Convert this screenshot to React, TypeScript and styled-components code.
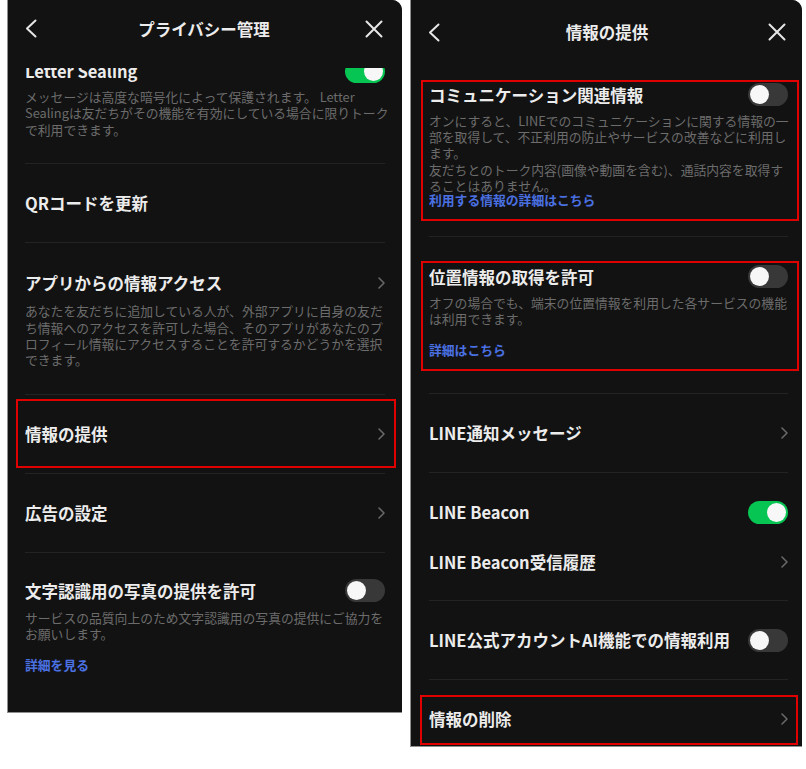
import React from "react";
import styled, { createGlobalStyle } from "styled-components";

const Global = createGlobalStyle`
  html, body { margin: 0; padding: 0; background: #ffffff; }
  body { font-family: "Noto Sans CJK JP", "Noto Sans", sans-serif; }
  #root { width: 806px; height: 769px; }
`;

const Page = styled.div`
  display: flex;
  align-items: flex-start;
  gap: 8px;
  padding-left: 7px;
  width: 806px;
  height: 769px;
  box-sizing: border-box;
`;

const Panel = styled.section<{ $w: number; $h: number; $pl: number; $pr: number }>`
  --pl: ${(p) => p.$pl}px;
  --pr: ${(p) => p.$pr}px;
  width: ${(p) => p.$w}px;
  height: ${(p) => p.$h}px;
  box-sizing: border-box;
  background: #121212;
  border-left: 1px solid #8f8f8f;
  border-bottom: 1px solid #8f8f8f;
  border-top-right-radius: 10px;
  display: flex;
  flex-direction: column;
  overflow: hidden;
`;

const Header = styled.header<{ $h: number; $pb: number; $il: number; $ir: number }>`
  position: relative;
  z-index: 1;
  flex-shrink: 0;
  height: ${(p) => p.$h}px;
  box-sizing: border-box;
  padding: 0 ${(p) => p.$ir}px ${(p) => p.$pb}px ${(p) => p.$il}px;
  background: #121212;
  display: grid;
  grid-template-columns: 1fr auto 1fr;
  align-items: center;
`;

const HeaderTitle = styled.h1`
  margin: 0;
  font-size: 16.5px;
  font-weight: 700;
  color: #ececec;
  white-space: nowrap;
`;

const HeaderBtn = styled.span<{ $end?: boolean }>`
  display: flex;
  justify-self: ${(p) => (p.$end ? "end" : "start")};
`;

const List = styled.div`
  flex: 1;
  min-height: 0;
  overflow: hidden;
  display: flex;
  flex-direction: column;
`;

const Section = styled.div<{ $pt: number; $pb: number; $mt?: number; $gap?: number }>`
  position: relative;
  flex-shrink: 0;
  display: flex;
  flex-direction: column;
  gap: ${(p) => p.$gap ?? 0}px;
  margin-top: ${(p) => p.$mt ?? 0}px;
  padding: ${(p) => p.$pt}px var(--pr) ${(p) => p.$pb}px var(--pl);
`;

const Row = styled.div<{ $h?: number }>`
  position: relative;
  flex-shrink: 0;
  height: ${(p) => p.$h ?? 78}px;
  padding: 0 var(--pr) 0 var(--pl);
  display: flex;
  align-items: center;
  justify-content: space-between;
`;

const TitleRow = styled.div`
  height: 22px;
  display: flex;
  align-items: center;
  justify-content: space-between;
  gap: 12px;
`;

const Title = styled.span`
  font-size: 16.5px;
  font-weight: 700;
  color: #ececec;
  white-space: nowrap;
  line-height: 22px;
`;

const Desc = styled.p<{ $gap: number }>`
  margin: ${(p) => p.$gap}px 0 0;
  font-size: 12.8px;
  line-height: 16.4px;
  color: #6c6c6c;
`;

const Line = styled.span`
  display: block;
  white-space: nowrap;
`;

const Link = styled.a<{ $mt: number }>`
  display: block;
  margin-top: ${(p) => p.$mt}px;
  font-size: 12.8px;
  line-height: 16.4px;
  font-weight: 700;
  color: #4a70e2;
  text-decoration: none;
  white-space: nowrap;
`;

const Divider = styled.hr`
  flex-shrink: 0;
  margin: 0 var(--pr) 0 var(--pl);
  border: 0;
  height: 1px;
  background: #232323;
`;

const Highlight = styled.div<{ $t: number; $b: number; $l: number; $r: number }>`
  position: absolute;
  top: ${(p) => p.$t}px;
  bottom: ${(p) => p.$b}px;
  left: ${(p) => p.$l}px;
  right: ${(p) => p.$r}px;
  border: 2px solid #e00000;
  pointer-events: none;
`;

const Toggle = styled.span<{ $on?: boolean }>`
  position: relative;
  flex-shrink: 0;
  width: 40px;
  height: 23px;
  border-radius: 12px;
  background: ${(p) => (p.$on ? "#07c552" : "#383838")};
  &::after {
    content: "";
    position: absolute;
    top: 2px;
    left: ${(p) => (p.$on ? "19px" : "2px")};
    width: 19px;
    height: 19px;
    border-radius: 50%;
    background: #f7f7f7;
  }
`;

const Chevron = () => (
  <svg width="7" height="12" viewBox="0 0 7 12" fill="none">
    <polyline points="1,1 6,6 1,11" stroke="#6a6a6a" strokeWidth="1.5" strokeLinecap="round" strokeLinejoin="round" />
  </svg>
);

const BackIcon = () => (
  <svg width="12" height="19" viewBox="0 0 12 19" fill="none">
    <polyline points="10.5,1.5 2,9.5 10.5,17.5" stroke="#e6e6e6" strokeWidth="2" strokeLinecap="round" strokeLinejoin="round" />
  </svg>
);

const CloseIcon = () => (
  <svg width="18" height="18" viewBox="0 0 18 18" fill="none">
    <path d="M1.5 1.5 L16.5 16.5 M16.5 1.5 L1.5 16.5" stroke="#e6e6e6" strokeWidth="2" strokeLinecap="round" />
  </svg>
);

const Lines = ({ lines }: { lines: string[] }) => (
  <>
    {lines.map((l, i) => (
      <Line key={i}>{l}</Line>
    ))}
  </>
);

const PrivacyPanel = () => (
  <Panel $w={395} $h={713} $pl={17} $pr={17}>
    <Header $h={68} $pb={11} $il={17} $ir={19}>
      <HeaderBtn>
        <BackIcon />
      </HeaderBtn>
      <HeaderTitle>プライバシー管理</HeaderTitle>
      <HeaderBtn $end>
        <CloseIcon />
      </HeaderBtn>
    </Header>
    <List>
      <Section $mt={-8} $pt={0} $pb={25}>
        <TitleRow>
          <Title>Letter Sealing</Title>
          <Toggle $on />
        </TitleRow>
        <Desc $gap={7}>
          <Lines
            lines={[
              "メッセージは高度な暗号化によって保護されます。 Letter",
              "Sealingは友だちがその機能を有効にしている場合に限りトーク",
              "で利用できます。",
            ]}
          />
        </Desc>
      </Section>
      <Divider />
      <Row>
        <Title>QRコードを更新</Title>
      </Row>
      <Divider />
      <Section $pt={29} $pb={25}>
        <TitleRow>
          <Title>アプリからの情報アクセス</Title>
          <Chevron />
        </TitleRow>
        <Desc $gap={9}>
          <Lines
            lines={[
              "あなたを友だちに追加している人が、外部アプリに自身の友だ",
              "ち情報へのアクセスを許可した場合、そのアプリがあなたのプ",
              "ロフィール情報にアクセスすることを許可するかどうかを選択",
              "できます。",
            ]}
          />
        </Desc>
      </Section>
      <Divider />
      <Row>
        <Title>情報の提供</Title>
        <Chevron />
        <Highlight $t={4} $b={5} $l={8} $r={6} />
      </Row>
      <Divider />
      <Row>
        <Title>広告の設定</Title>
        <Chevron />
      </Row>
      <Divider />
      <Section $pt={27} $pb={0}>
        <TitleRow>
          <Title>文字認識用の写真の提供を許可</Title>
          <Toggle />
        </TitleRow>
        <Desc $gap={8}>
          <Lines lines={["サービスの品質向上のため文字認識用の写真の提供にご協力を", "お願いします。"]} />
        </Desc>
        <Link $mt={14.5}>詳細を見る</Link>
      </Section>
    </List>
  </Panel>
);

const ProvidePanel = () => (
  <Panel $w={392} $h={747} $pl={18} $pr={14}>
    <Header $h={64} $pb={0} $il={17} $ir={16}>
      <HeaderBtn>
        <BackIcon />
      </HeaderBtn>
      <HeaderTitle>情報の提供</HeaderTitle>
      <HeaderBtn $end>
        <CloseIcon />
      </HeaderBtn>
    </Header>
    <List>
      <Section $pt={19.5} $pb={28}>
        <Highlight $t={16} $b={15} $l={10} $r={3} />
        <TitleRow>
          <Title>コミュニケーション関連情報</Title>
          <Toggle />
        </TitleRow>
        <Desc $gap={7}>
          <Lines
            lines={[
              "オンにすると、LINEでのコミュニケーションに関する情報の一",
              "部を取得して、不正利用の防止やサービスの改善などに利用し",
              "ます。",
              "友だちとのトーク内容(画像や動画を含む)、通話内容を取得す",
              "ることはありません。",
            ]}
          />
        </Desc>
        <Link $mt={-3}>利用する情報の詳細はこちら</Link>
      </Section>
      <Divider />
      <Section $pt={29} $pb={35}>
        <Highlight $t={23.6} $b={22} $l={10} $r={3} />
        <TitleRow>
          <Title>位置情報の取得を許可</Title>
          <Toggle />
        </TitleRow>
        <Desc $gap={7}>
          <Lines lines={["オフの場合でも、端末の位置情報を利用した各サービスの機能", "は利用できます。"]} />
        </Desc>
        <Link $mt={14.2}>詳細はこちら</Link>
      </Section>
      <Divider />
      <Row>
        <Title>LINE通知メッセージ</Title>
        <Chevron />
      </Row>
      <Divider />
      <Section $pt={28} $pb={27} $gap={28}>
        <TitleRow>
          <Title>LINE Beacon</Title>
          <Toggle $on />
        </TitleRow>
        <TitleRow>
          <Title>LINE Beacon受信履歴</Title>
          <Chevron />
        </TitleRow>
      </Section>
      <Divider />
      <Row>
        <Title>LINE公式アカウントAI機能での情報利用</Title>
        <Toggle />
      </Row>
      <Divider />
      <Row>
        <Title>情報の削除</Title>
        <Chevron />
        <Highlight $t={14.5} $b={13.5} $l={9} $r={4} />
      </Row>
    </List>
  </Panel>
);

export default function App() {
  return (
    <>
      <Global />
      <Page>
        <PrivacyPanel />
        <ProvidePanel />
      </Page>
    </>
  );
}
